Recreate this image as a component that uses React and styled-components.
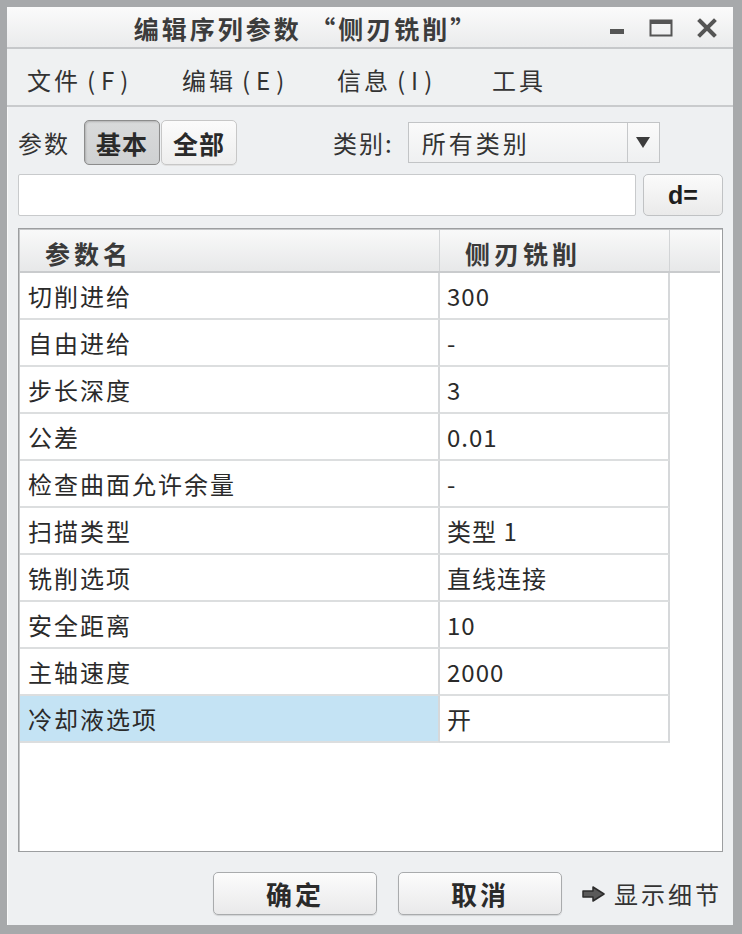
import React from "react";
import styled, { createGlobalStyle } from "styled-components";

const GlobalStyle = createGlobalStyle`
  html, body { margin: 0; padding: 0; background: #ffffff; }
  * { box-sizing: border-box; }
  body { font-family: "Noto Sans CJK SC", "Noto Sans", sans-serif; }
`;

const FONT = `"Noto Sans CJK SC", "Noto Sans", sans-serif`;

const Window = styled.div`
  width: 742px;
  height: 934px;
  border-style: solid;
  border-color: #a7a9ab;
  border-width: 7px 9px 9px 7px;
  background: #eef0f2;
  display: flex;
  flex-direction: column;
  box-shadow: inset 1px 1px 0 #fafafa;
  color: #2e2e2e;
  font-family: ${FONT};
`;

const TitleBar = styled.div`
  height: 42px;
  flex: none;
  display: flex;
  align-items: center;
  background: linear-gradient(#fbfbfb, #eaebec);
  border-bottom: 2px solid #c6c8ca;
`;

const TitleText = styled.div`
  flex: 1;
  text-align: center;
  font-size: 25px;
  font-weight: 700;
  letter-spacing: 3px;
  color: #3c3c3c;
  line-height: 1;
  padding-top: 2px;
  padding-left: 8px;
`;

const Controls = styled.div`
  width: 136px;
  flex: none;
  display: flex;
  align-items: center;
  gap: 24px;
  padding-left: 12px;
  padding-top: 2px;
`;

const MenuBar = styled.div`
  height: 58px;
  flex: none;
  display: grid;
  grid-template-columns: repeat(4, 155px);
  align-items: center;
  padding-left: 20px;
  padding-top: 5px;
  border-bottom: 2px solid #c9cbcd;
  background: #eff1f2;
`;

const MenuItem = styled.div`
  font-size: 24px;
  letter-spacing: 3px;
  color: #333;
  line-height: 1;
`;

const MenuKey = styled.span`
  margin-left: 6px;
  letter-spacing: 6px;
`;

const Body = styled.div`
  flex: 1;
  min-height: 0;
  display: flex;
  flex-direction: column;
  padding: 13px 10px 10px 11px;
`;

const ToolRow = styled.div`
  height: 45px;
  display: flex;
  align-items: center;
`;

const Label = styled.span`
  font-size: 24px;
  letter-spacing: 2px;
  color: #333;
  line-height: 1;
  margin-right: ${(p) => p.$mr || 0}px;
`;

const ToggleGroup = styled.div`
  display: flex;
  gap: 1px;
  height: 45px;
  margin-right: 96px;
`;

const Toggle = styled.div`
  width: 76px;
  height: 100%;
  display: flex;
  align-items: center;
  justify-content: center;
  font-size: 25px;
  font-weight: 700;
  letter-spacing: 1px;
  color: #2a2a2a;
  border-radius: 5px;
  border: 1px solid ${(p) => (p.$active ? "#8c8c8c" : "#c7c7c7")};
  background: ${(p) =>
    p.$active
      ? "linear-gradient(#d9dadb, #cfd1d2)"
      : "linear-gradient(#fbfbfb, #eeeeee)"};
  box-shadow: ${(p) =>
    p.$active ? "inset 1px 1px 2px rgba(0,0,0,0.18)" : "0 1px 0 #e0e0e0"};
`;

const Combo = styled.div`
  width: 252px;
  height: 41px;
  display: flex;
  margin-left: 4px;
  border: 1px solid #c2c4c6;
  background: linear-gradient(#fafafa, #eff0f1);
`;

const ComboValue = styled.div`
  flex: 1;
  display: flex;
  align-items: center;
  padding-left: 13px;
  font-size: 24px;
  letter-spacing: 3px;
  color: #333;
`;

const ComboArrow = styled.div`
  width: 32px;
  display: flex;
  align-items: center;
  justify-content: center;
  border-left: 1px solid #c6c8ca;
`;

const InputRow = styled.div`
  height: 42px;
  margin-top: 9px;
  display: flex;
  gap: 7px;
`;

const TextInput = styled.div`
  flex: 1;
  height: 100%;
  background: #ffffff;
  border: 1px solid #c8cacc;
  border-radius: 2px;
`;

const DButton = styled.div`
  width: 80px;
  height: 100%;
  display: flex;
  align-items: center;
  justify-content: center;
  font-family: "Liberation Sans", Arial, sans-serif;
  font-weight: 700;
  font-size: 25px;
  color: #1e1e1e;
  border: 1px solid #c0c2c4;
  border-radius: 5px;
  background: linear-gradient(#fbfbfb, #eaeaea);
`;

const Table = styled.div`
  flex: 1;
  min-height: 0;
  margin-top: 12px;
  background: #ffffff;
  border: 1px solid #9c9ea0;
  box-shadow: inset 1px 1px 0 #c4c6c8;
  padding: 1px 2px 0 1px;
  display: flex;
  flex-direction: column;
`;

const HeaderRow = styled.div`
  height: 43px;
  flex: none;
  display: grid;
  grid-template-columns: 420px 230px 1fr;
  background: linear-gradient(#f9f9f9, #e7e8e9);
  border-bottom: 2px solid #c9cbcd;
`;

const HeaderCell = styled.div`
  display: flex;
  align-items: center;
  padding-left: 25px;
  padding-top: 4px;
  font-size: 25px;
  font-weight: 700;
  letter-spacing: 4px;
  color: #3a3a3a;
  border-right: ${(p) => (p.$last ? "none" : "1px solid #d2d4d6")};
`;

const Row = styled.div`
  height: 47px;
  flex: none;
  display: grid;
  grid-template-columns: 420px 230px;
`;

const Cell = styled.div`
  display: flex;
  align-items: center;
  padding-left: ${(p) => (p.$value ? 7 : 8)}px;
  font-size: 24px;
  letter-spacing: ${(p) => (p.$value ? 1 : 2)}px;
  color: #2a2a2a;
  border-bottom: 2px solid #dcdedf;
  border-right: 2px solid #d6d8da;
  background: ${(p) => (p.$selected ? "#c4e3f4" : "#ffffff")};
`;

const Footer = styled.div`
  height: 43px;
  margin-top: 20px;
  flex: none;
  display: flex;
  justify-content: flex-end;
  align-items: center;
  gap: 20px;
  padding-right: 1px;
`;

const Buttons = styled.div`
  display: flex;
  gap: 21px;
`;

const Button = styled.div`
  width: 164px;
  height: 43px;
  display: flex;
  align-items: center;
  justify-content: center;
  font-size: 26px;
  font-weight: 700;
  letter-spacing: 3px;
  color: #2a2a2a;
  border: 1px solid #a9abad;
  border-radius: 5px;
  background: linear-gradient(#fcfcfc, #e9e9ea);
  box-shadow: 0 1px 1px rgba(0,0,0,0.12);
`;

const DetailLink = styled.div`
  display: flex;
  align-items: center;
  gap: 8px;
  font-size: 24px;
  letter-spacing: 3px;
  color: #333;
`;

const rows = [
  ["切削进给", "300"],
  ["自由进给", "-"],
  ["步长深度", "3"],
  ["公差", "0.01"],
  ["检查曲面允许余量", "-"],
  ["扫描类型", "类型 1"],
  ["铣削选项", "直线连接"],
  ["安全距离", "10"],
  ["主轴速度", "2000"],
  ["冷却液选项", "开"],
];

function MinIcon() {
  return (
    <svg width="16" height="16" viewBox="0 0 16 16">
      <rect x="1" y="9" width="14" height="5" fill="#555" />
    </svg>
  );
}

function MaxIcon() {
  return (
    <svg width="24" height="18" viewBox="0 0 24 18">
      <rect x="1.5" y="1.5" width="21" height="15" fill="none" stroke="#555" strokeWidth="2" />
      <rect x="1" y="1" width="22" height="4" fill="#555" />
    </svg>
  );
}

function CloseIcon() {
  return (
    <svg width="20" height="20" viewBox="0 0 20 20">
      <path d="M3 3 L17 17 M17 3 L3 17" stroke="#555" strokeWidth="4" strokeLinecap="square" />
    </svg>
  );
}

function DownArrow() {
  return (
    <svg width="14" height="11" viewBox="0 0 14 11">
      <path d="M0 0 H14 L7 11 Z" fill="#3c3c3c" />
    </svg>
  );
}

function RightArrow() {
  return (
    <svg width="24" height="16" viewBox="0 0 24 16">
      <path d="M1 5 H11 V1 L22 8 L11 15 V11 H1 Z" fill="#5a5a5a" stroke="#2c2c2c" strokeWidth="1.5" strokeLinejoin="round" />
    </svg>
  );
}

export default function App() {
  return (
    <>
      <GlobalStyle />
      <Window>
        <TitleBar>
          <TitleText>编辑序列参数 “侧刃铣削”</TitleText>
          <Controls>
            <MinIcon />
            <MaxIcon />
            <CloseIcon />
          </Controls>
        </TitleBar>
        <MenuBar>
          <MenuItem>文件<MenuKey>(F)</MenuKey></MenuItem>
          <MenuItem>编辑<MenuKey>(E)</MenuKey></MenuItem>
          <MenuItem>信息<MenuKey>(I)</MenuKey></MenuItem>
          <MenuItem>工具</MenuItem>
        </MenuBar>
        <Body>
          <ToolRow>
            <Label $mr={14}>参数</Label>
            <ToggleGroup>
              <Toggle $active>基本</Toggle>
              <Toggle>全部</Toggle>
            </ToggleGroup>
            <Label $mr={10}>类别:</Label>
            <Combo>
              <ComboValue>所有类别</ComboValue>
              <ComboArrow>
                <DownArrow />
              </ComboArrow>
            </Combo>
          </ToolRow>
          <InputRow>
            <TextInput />
            <DButton>d=</DButton>
          </InputRow>
          <Table>
            <HeaderRow>
              <HeaderCell>参数名</HeaderCell>
              <HeaderCell>侧刃铣削</HeaderCell>
              <HeaderCell $last />
            </HeaderRow>
            {rows.map(([name, value], i) => (
              <Row key={name}>
                <Cell $selected={i === rows.length - 1}>{name}</Cell>
                <Cell $value>{value}</Cell>
              </Row>
            ))}
          </Table>
          <Footer>
            <Buttons>
              <Button>确定</Button>
              <Button>取消</Button>
            </Buttons>
            <DetailLink>
              <RightArrow />
              显示细节
            </DetailLink>
          </Footer>
        </Body>
      </Window>
    </>
  );
}
